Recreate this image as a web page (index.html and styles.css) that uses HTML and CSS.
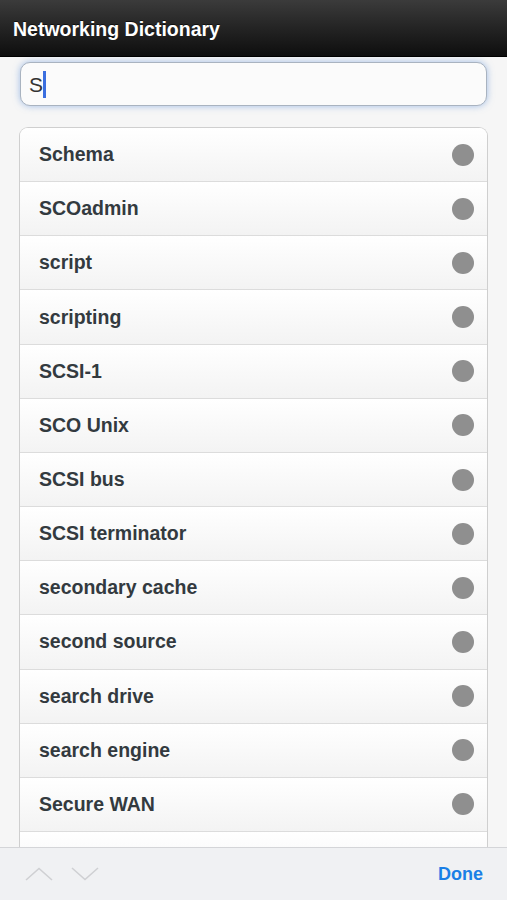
FILE: index.html
```html
<!DOCTYPE html>
<html>
<head>
<meta charset="utf-8">
<link rel="stylesheet" href="styles.css">
</head>
<body>
<div class="app">
  <header class="topbar"><h1 class="title">Networking Dictionary</h1></header>
  <main class="content">
    <div class="search"><span class="query">S</span><span class="caret"></span></div>
    <ul class="list">
      <li class="row"><span class="term">Schema</span><span class="dot"></span></li>
      <li class="row"><span class="term">SCOadmin</span><span class="dot"></span></li>
      <li class="row"><span class="term">script</span><span class="dot"></span></li>
      <li class="row"><span class="term">scripting</span><span class="dot"></span></li>
      <li class="row"><span class="term">SCSI-1</span><span class="dot"></span></li>
      <li class="row"><span class="term">SCO Unix</span><span class="dot"></span></li>
      <li class="row"><span class="term">SCSI bus</span><span class="dot"></span></li>
      <li class="row"><span class="term">SCSI terminator</span><span class="dot"></span></li>
      <li class="row"><span class="term">secondary cache</span><span class="dot"></span></li>
      <li class="row"><span class="term">second source</span><span class="dot"></span></li>
      <li class="row"><span class="term">search drive</span><span class="dot"></span></li>
      <li class="row"><span class="term">search engine</span><span class="dot"></span></li>
      <li class="row"><span class="term">Secure WAN</span><span class="dot"></span></li>
      <li class="row"></li>
    </ul>
  </main>
  <footer class="toolbar">
    <div class="arrows">
      <svg class="chev" width="28" height="14" viewBox="0 0 28 14"><path d="M1 13 L14 1.5 L27 13" fill="none" stroke="#cfd0d3" stroke-width="1.6"/></svg>
      <svg class="chev" width="28" height="14" viewBox="0 0 28 14"><path d="M1 1 L14 12.5 L27 1" fill="none" stroke="#cfd0d3" stroke-width="1.6"/></svg>
    </div>
    <span class="done">Done</span>
  </footer>
</div>
</body>
</html>
```

FILE: styles.css
```css
* { box-sizing: border-box; }
html, body { margin: 0; padding: 0; }
body {
  font-family: "Liberation Sans", Arial, sans-serif;
  background: #f6f6f6;
}
.app {
  width: 507px;
  height: 900px;
  display: flex;
  flex-direction: column;
  overflow: hidden;
}
.topbar {
  height: 57px;
  flex: none;
  background: linear-gradient(#3b3b3b, #262626 45%, #0e0e0e);
  display: flex;
  align-items: center;
  padding: 3px 0 0 13px;
  border-bottom: 1px solid #000;
}
.title {
  margin: 0;
  font-size: 19.5px;
  font-weight: bold;
  color: #fff;
  text-shadow: 0 -1px 0 rgba(0,0,0,0.6);
}
.content {
  flex: 1;
  overflow: hidden;
  padding: 5px 19px 0 19px;
  background: #f6f6f6;
}
.search {
  margin: 0 1px 0 1px;
  height: 44px;
  border: 1px solid #a9b3c0;
  border-radius: 10px;
  background: #fbfbfb;
  box-shadow: 0 0 7px rgba(90,140,215,0.55);
  display: flex;
  align-items: center;
  padding-left: 8px;
}
.query {
  font-size: 21px;
  color: #333;
  line-height: 1;
}
.caret {
  width: 3px;
  height: 27px;
  background: #3b6fe0;
}
.list {
  list-style: none;
  margin: 21px 0 0 0;
  padding: 0;
  border: 1px solid #cfcfcf;
  border-bottom: none;
  border-radius: 9px 9px 0 0;
  overflow: hidden;
  background: #fff;
}
.row {
  height: 54.17px;
  display: flex;
  align-items: center;
  justify-content: space-between;
  padding: 0 13px 0 19px;
  background: linear-gradient(#ffffff, #f3f3f3);
  border-bottom: 1px solid #dcdcdc;
}
.term {
  font-size: 19.5px;
  font-weight: bold;
  color: #333a3f;
}
.dot {
  width: 22px;
  height: 22px;
  border-radius: 50%;
  background: #8f8f8f;
}
.toolbar {
  height: 53px;
  flex: none;
  background: #f0f1f3;
  border-top: 1px solid #d4d5d8;
  display: flex;
  align-items: center;
  justify-content: space-between;
  padding: 0 24px 0 25px;
}
.arrows {
  display: flex;
  gap: 18px;
  align-items: center;
}
.chev { display: block; }
.done {
  font-size: 18px;
  font-weight: bold;
  color: #1a7fe6;
}
```
